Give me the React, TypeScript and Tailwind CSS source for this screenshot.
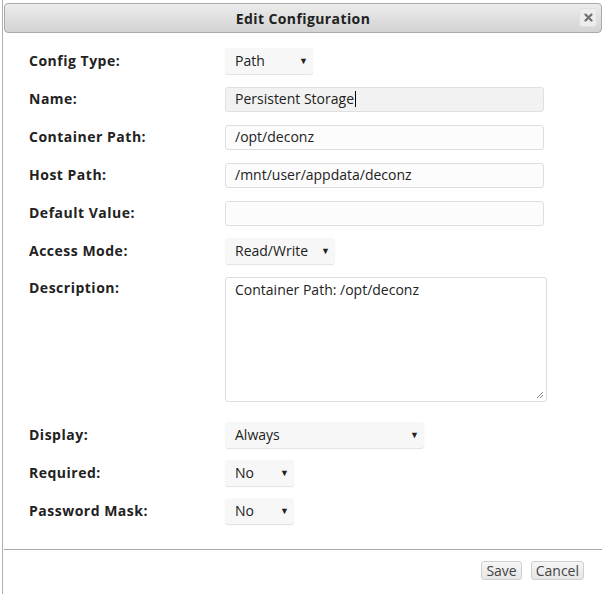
import React from 'react';

const font = { fontFamily: '"Open Sans", "Liberation Sans", sans-serif' };

function Row({ label, children, tall }: { label: string; children: React.ReactNode; tall?: boolean }) {
  return (
    <div className={`flex ${tall ? 'items-start h-[146px]' : 'items-center h-[38px]'}`}>
      <div className={`w-[221px] pl-[25px] pb-px text-[14px] font-bold tracking-[0.5px] text-[#222] ${tall ? 'pt-[7px]' : ''}`}>{label}</div>
      {children}
    </div>
  );
}

function Select({ value, width }: { value: string; width: string }) {
  return (
    <div
      className={`${width} h-[26px] flex items-center justify-between pl-[10px] pr-[5px] pb-px bg-[#f7f7f7] rounded-[3px] shadow-[0_1px_1px_rgba(0,0,0,0.12)] text-[14px] text-[#222]`}
    >
      <span>{value}</span>
      <span className="text-[9px] text-[#222]">▼</span>
    </div>
  );
}

function Input({ value, focused }: { value: string; focused?: boolean }) {
  return (
    <div
      className={`w-[319px] h-[25px] flex items-center px-[9px] pb-px border rounded-[3px] text-[14px] text-[#222] ${
        focused ? 'bg-[#f2f2f2] border-[#e0e0e0]' : 'bg-[#fcfcfc] border-[#dedede]'
      }`}
    >
      <span>{value}</span>
      {focused && <span className="inline-block w-px h-[16px] bg-black ml-px"></span>}
    </div>
  );
}

export default function App() {
  return (
    <div className="w-[604px] h-[594px] bg-white overflow-hidden" style={font}>
      <div className="ml-[2px] h-full border-l border-[#b0b0b0] pl-px pt-[3px] pr-[2px] flex flex-col">
        {/* Title bar */}
        <div className="relative h-[30px] flex items-center justify-center rounded-[4px] border border-[#aaa] bg-gradient-to-b from-[#ececec] to-[#d3d3d3]">
          <span className="text-[14px] font-bold tracking-[0.4px] text-[#222]">Edit Configuration</span>
          <div className="absolute right-[4px] top-[4px] w-[18px] h-[19px] rounded-[3px] bg-[#ededed] border border-[#e0e0e0] flex items-center justify-center">
            <svg width="9" height="9" viewBox="0 0 9 9">
              <path d="M1.5 1.5 L7.5 7.5 M7.5 1.5 L1.5 7.5" stroke="#6f6f6f" strokeWidth="2.2" strokeLinecap="round" />
            </svg>
          </div>
        </div>

        {/* Form */}
        <div className="pt-[9px] flex flex-col">
          <Row label="Config Type:">
            <Select value="Path" width="w-[88px]" />
          </Row>
          <Row label="Name:">
            <Input value="Persistent Storage" focused />
          </Row>
          <Row label="Container Path:">
            <Input value="/opt/deconz" />
          </Row>
          <Row label="Host Path:">
            <Input value="/mnt/user/appdata/deconz" />
          </Row>
          <Row label="Default Value:">
            <Input value="" />
          </Row>
          <Row label="Access Mode:">
            <Select value="Read/Write" width="w-[110px]" />
          </Row>
          <Row label="Description:" tall>
            <div className="relative mt-[7px] w-[322px] h-[125px] border border-[#dcdcdc] rounded-[3px] bg-white px-[9px] pt-[1px] text-[14px] text-[#222]">
              Container Path: /opt/deconz
              <svg className="absolute right-[2px] bottom-[2px]" width="8" height="8" viewBox="0 0 8 8">
                <path d="M7 1 L1 7 M7 4 L4 7" stroke="#888" strokeWidth="1" />
              </svg>
            </div>
          </Row>
          <Row label="Display:">
            <Select value="Always" width="w-[199px]" />
          </Row>
          <Row label="Required:">
            <Select value="No" width="w-[69px]" />
          </Row>
          <Row label="Password Mask:">
            <Select value="No" width="w-[69px]" />
          </Row>
        </div>

        {/* Footer */}
        <div className="mt-[19px] border-t border-[#a8a8a8]"></div>
        <div className="flex justify-end gap-[9px] pt-[11px] pr-[18px]">
          <button className="h-[19px] px-[4px] flex items-center bg-gradient-to-b from-[#f6f6f6] to-[#e6e6e6] border border-[#cfcfcf] rounded-[3px] text-[14px] text-[#444]">
            Save
          </button>
          <button className="h-[19px] px-[4px] flex items-center bg-gradient-to-b from-[#f6f6f6] to-[#e6e6e6] border border-[#cfcfcf] rounded-[3px] text-[14px] text-[#444]">
            Cancel
          </button>
        </div>
      </div>
    </div>
  );
}
